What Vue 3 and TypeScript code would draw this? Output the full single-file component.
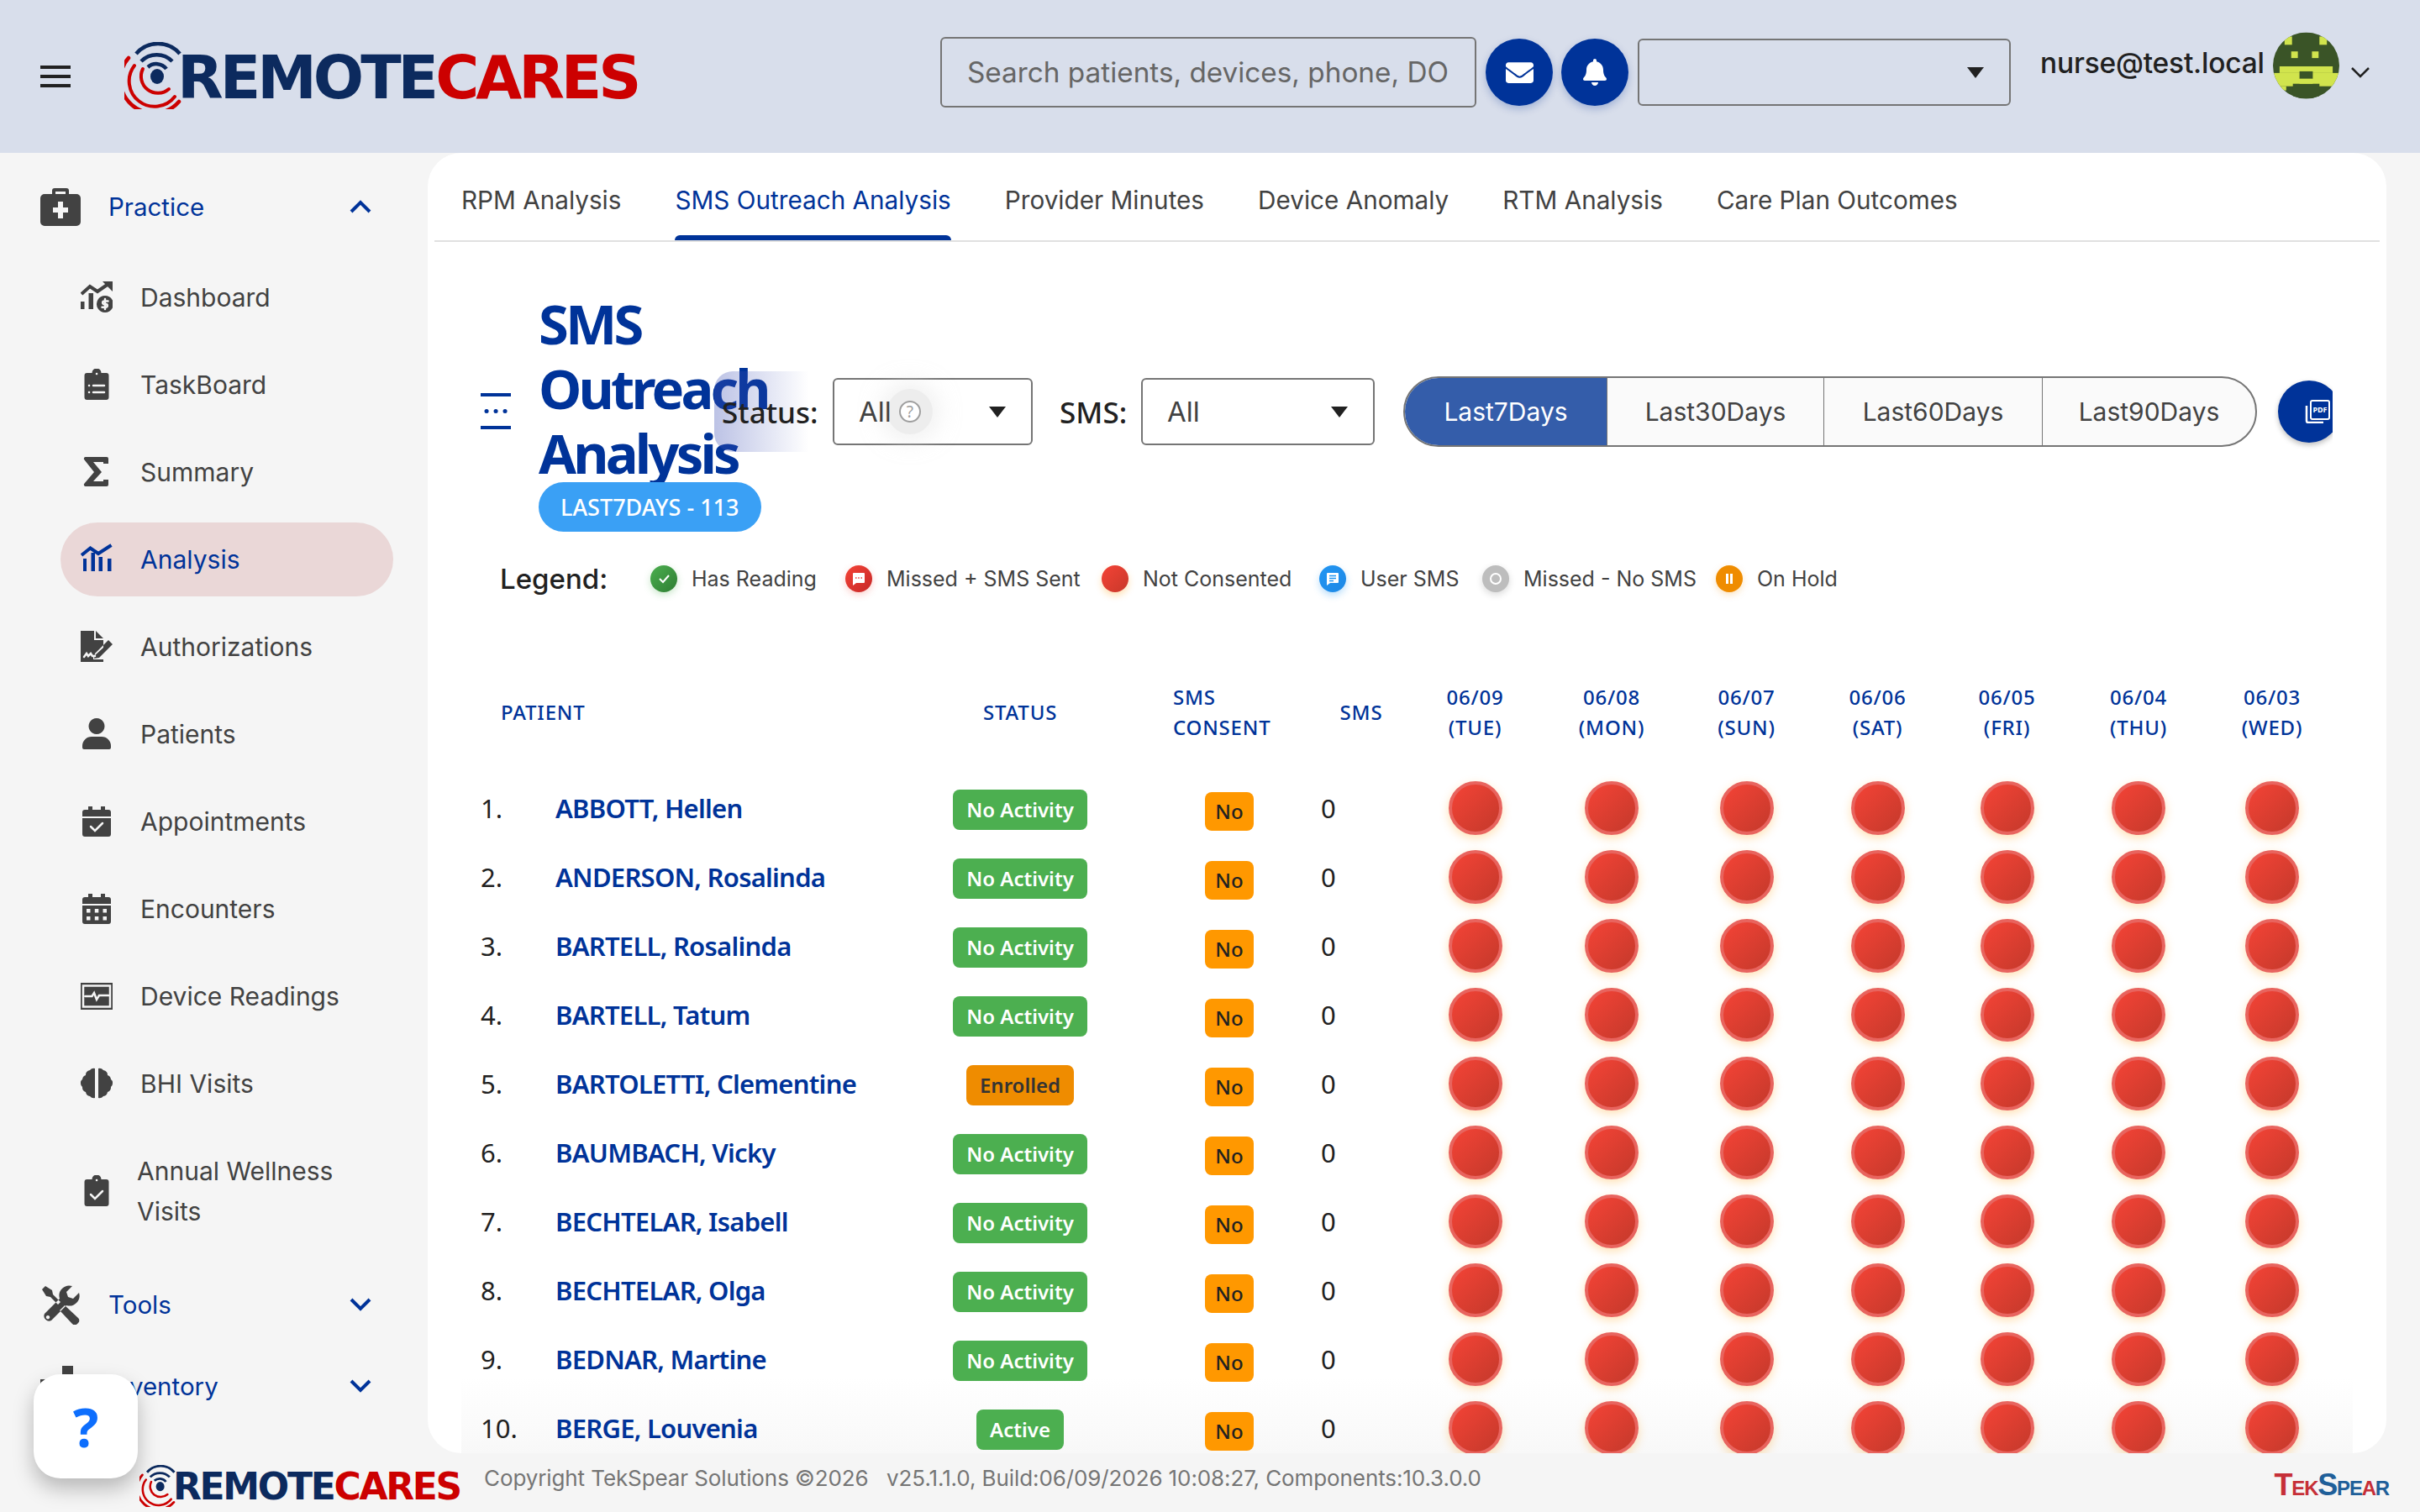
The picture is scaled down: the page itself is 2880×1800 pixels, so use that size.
<script setup lang="ts">
interface NavIcon {
  d?: string;
  line?: string;
  cut?: string;
}

interface NavItem {
  label: string;
  icon: NavIcon;
  active?: boolean;
}

const clipTop =
  'M4.5 8a3 3 0 0 1 3-3h6a5.5 5.5 0 0 1 11 0h6a3 3 0 0 1 3 3v26a3 3 0 0 1-3 3h-23a3 3 0 0 1-3-3z';
const calTop = 'M9 1h5v4h10V1h5v4h4a3 3 0 0 1 3 3v5H2V8a3 3 0 0 1 3-3h4z';

const navItems: NavItem[] = [
  {
    label: 'Dashboard',
    icon: {
      d: 'M0 24h4.5v9H0z M9.5 14h5.5v19H9.5z M26 0h12v12z M29 17a10 10 0 1 1-.01 0z',
      line: 'M1 15L11 6l9 6 13-9',
      cut: 'M29 21v12 M32.5 23.5h-4.5a1.8 1.8 0 0 0 0 3.6h2a1.8 1.8 0 0 1 0 3.6h-4.5'
    }
  },
  {
    label: 'TaskBoard',
    icon: { d: clipTop, cut: 'M15 20h13 M15 28h13 M10 20h.1 M10 28h.1 M19 6h.1' }
  },
  {
    label: 'Summary',
    icon: { d: 'M6 1h25a2 2 0 0 1 2 2v6h-6V7H15l10 12-10 11h12v-2h6v6a2 2 0 0 1-2 2H6a2 2 0 0 1-1.500-3.500L16 19 4.500 4.500A2 2 0 0 1 6 1z' }
  },
  {
    label: 'Analysis',
    active: true,
    icon: {
      d: 'M3 18h4v15H3z M12.500 11h4.500v22h-4.500z M21.500 16h4.500v17h-4.500z M32 18h4.500v15H32z',
      line: 'M1 14L11.500 5.500 21 12 36.500 2'
    }
  },
  {
    label: 'Authorizations',
    icon: {
      d: 'M0 0h16v11h11v9L15 31v3h12v3H0z M18 0l9 9h-9z M33 11l5 5-16 16-6 1 1-6z',
      cut: 'M4 31l3-4 2 3 3-3 2 3h3'
    }
  },
  {
    label: 'Patients',
    icon: { d: 'M19 0a9.500 9.500 0 1 1-.01 0z M13 22h12a11 11 0 0 1 11 11v2a2 2 0 0 1-2 2H4a2 2 0 0 1-2-2v-2a11 11 0 0 1 11-11z' }
  },
  {
    label: 'Appointments',
    icon: {
      d: calTop + ' M2 15h34v19a3 3 0 0 1-3 3H5a3 3 0 0 1-3-3z',
      cut: 'M12 25l5 5 9-9'
    }
  },
  {
    label: 'Encounters',
    icon: {
      d: calTop + ' M2 15h34v19a3 3 0 0 1-3 3H5a3 3 0 0 1-3-3z M7 19h4.500v4.500H7z M16.800 19h4.500v4.500h-4.500z M26.500 19h4.500v4.500h-4.500z M7 28h4.500v4.500H7z M16.800 28h4.500v4.500h-4.500z M26.500 28h4.500v4.500h-4.500z'
    }
  },
  {
    label: 'Device Readings',
    icon: { d: 'M0 3h38v32H0z', cut: 'M3 6.500h32v25H3z M5.500 19h8l2.500-4 3 8 3-5h11' }
  },
  {
    label: 'BHI Visits',
    icon: {
      d: 'M17 1a6 6 0 0 0-6 2 6 6 0 0 0-5 6 6 6 0 0 0-4 5 5 5 0 0 0-2 5 5 5 0 0 0 2 4 6 6 0 0 0 4 6 6 6 0 0 0 5 5 6 6 0 0 0 6 2z M21 1a6 6 0 0 1 6 2 6 6 0 0 1 5 6 6 6 0 0 1 4 5 5 5 0 0 1 2 5 5 5 0 0 1-2 4 6 6 0 0 1-4 6 6 6 0 0 1-5 5 6 6 0 0 1-6 2z'
    }
  }
];

const annualIcon: NavIcon = { d: clipTop, cut: 'M12 23l5 5 9-9 M19 6h.1' };

const tabs: string[] = [
  'RPM Analysis',
  'SMS Outreach Analysis',
  'Provider Minutes',
  'Device Anomaly',
  'RTM Analysis',
  'Care Plan Outcomes'
];

const ranges: string[] = ['Last7Days', 'Last30Days', 'Last60Days', 'Last90Days'];

const legend = [
  { label: 'Has Reading', kind: 'reading' },
  { label: 'Missed + SMS Sent', kind: 'missed' },
  { label: 'Not Consented', kind: 'none' },
  { label: 'User SMS', kind: 'user' },
  { label: 'Missed - No SMS', kind: 'nosms' },
  { label: 'On Hold', kind: 'hold' }
];

const dates = [
  { day: '06/09', name: '(TUE)', w: 163 },
  { day: '06/08', name: '(MON)', w: 162 },
  { day: '06/07', name: '(SUN)', w: 159 },
  { day: '06/06', name: '(SAT)', w: 153 },
  { day: '06/05', name: '(FRI)', w: 155 },
  { day: '06/04', name: '(THU)', w: 158 },
  { day: '06/03', name: '(WED)', w: 160 }
];

const patients = [
  { name: 'ABBOTT, Hellen', status: 'No Activity' },
  { name: 'ANDERSON, Rosalinda', status: 'No Activity' },
  { name: 'BARTELL, Rosalinda', status: 'No Activity' },
  { name: 'BARTELL, Tatum', status: 'No Activity' },
  { name: 'BARTOLETTI, Clementine', status: 'Enrolled' },
  { name: 'BAUMBACH, Vicky', status: 'No Activity' },
  { name: 'BECHTELAR, Isabell', status: 'No Activity' },
  { name: 'BECHTELAR, Olga', status: 'No Activity' },
  { name: 'BEDNAR, Martine', status: 'No Activity' },
  { name: 'BERGE, Louvenia', status: 'Active' }
];

const mailPath =
  'M502.3 190.8c3.9-3.1 9.7-.2 9.7 4.7V400c0 26.500-21.500 48-48 48H48c-26.500 0-48-21.500-48-48V195.600c0-5 5.700-7.800 9.700-4.700 22.400 17.400 52.100 39.500 154.100 113.600 21.100 15.400 56.700 47.800 92.200 47.600 35.700.3 72-32.800 92.300-47.600 102-74.100 131.600-96.300 154-113.700zM256 320c23.200.4 56.600-29.200 73.400-41.400 132.700-96.300 142.800-104.700 173.400-128.700 5.800-4.500 9.200-11.500 9.200-18.900v-19c0-26.500-21.500-48-48-48H48C21.500 64 0 85.500 0 112v19c0 7.400 3.400 14.300 9.200 18.900 30.600 23.900 40.700 32.400 173.400 128.700 16.800 12.200 50.200 41.800 73.400 41.400z';
const bellPath =
  'M224 512c35.320 0 63.970-28.650 63.970-64H160.030c0 35.350 28.650 64 63.970 64zm215.390-149.710c-19.320-20.760-55.470-51.990-55.470-154.290 0-77.700-54.480-139.900-127.940-155.160V32c0-17.670-14.320-32-31.980-32s-31.980 14.330-31.980 32v20.840C118.560 68.100 64.080 130.300 64.080 208c0 102.300-36.150 133.530-55.470 154.290-6 6.450-8.660 14.160-8.610 21.710.11 16.400 12.980 32 32.100 32h383.800c19.120 0 32-15.600 32.100-32 .05-7.550-2.610-15.270-8.610-21.710z';
</script>

<template>
  <div class="page">
    <header class="topbar">
      <div class="burger"><span></span><span></span><span></span></div>
      <div class="logo">
        <svg class="logo-mark" viewBox="0 0 68 80" fill="none">
          <g stroke="#cc0000" stroke-linecap="round">
            <path d="M5 19A39 39 0 0 0 65 71" stroke-width="4.500" />
            <path d="M12 28A30 30 0 0 0 60 65" stroke-width="4" />
            <path d="M22 32A20 20 0 0 0 53 56" stroke-width="4" />
          </g>
          <g stroke="#0c2a5e" stroke-width="4.500">
            <path d="M14 14A34 34 0 0 1 66 14" />
            <path d="M20 23A26 26 0 0 1 57 23" />
            <path d="M28 30A15 15 0 0 1 50 32" />
          </g>
          <ellipse cx="39" cy="41" rx="8" ry="9" fill="#0c2a5e" />
        </svg>
        <span class="logo-text"><b>REMOTE</b><i>CARES</i></span>
      </div>
      <input class="search" placeholder="Search patients, devices, phone, DOB" />
      <button class="round-btn">
        <svg width="33" height="33" viewBox="0 0 512 512"><path :d="mailPath" fill="#fff" /></svg>
      </button>
      <button class="round-btn bell">
        <svg width="28" height="32" viewBox="0 0 448 512"><path :d="bellPath" fill="#fff" /></svg>
      </button>
      <div class="org-select"><span class="caret"></span></div>
      <span class="email">nurse@test.local</span>
      <svg class="avatar" viewBox="0 0 80 80">
        <defs>
          <clipPath id="avatarClip"><circle cx="40" cy="40" r="40" /></clipPath>
        </defs>
        <g clip-path="url(#avatarClip)">
          <rect width="80" height="80" fill="#3a5427" />
          <g fill="#d1e44d">
            <rect x="14" y="5" width="9" height="10" />
            <rect x="56" y="5" width="9" height="10" />
            <rect x="22" y="23" width="8" height="8" />
            <rect x="47" y="23" width="8" height="8" />
            <rect x="8" y="41" width="64" height="8" />
            <rect x="0" y="49" width="80" height="16" />
            <rect x="8" y="65" width="8" height="5" />
          </g>
          <rect x="32" y="47" width="16" height="9" fill="#3a5427" />
          <rect x="24" y="62" width="32" height="18" fill="#3a5427" />
          <rect x="32" y="56" width="16" height="6" fill="#d1e44d" />
        </g>
      </svg>
      <svg class="user-chevron" width="24" height="14" viewBox="0 0 24 14" fill="none">
        <path d="M2 2l10 10L22 2" stroke="#212121" stroke-width="2.500" />
      </svg>
    </header>

    <div class="body">
      <aside class="sidebar">
        <div class="group-row">
          <svg class="group-icon" width="48" height="48" viewBox="0 0 48 48">
            <path
              fill="#424242"
              fill-rule="evenodd"
              d="M14 9V5a3 3 0 0 1 3-3h14a3 3 0 0 1 3 3v4h9a5 5 0 0 1 5 5v28a5 5 0 0 1-5 5H5a5 5 0 0 1-5-5V14a5 5 0 0 1 5-5z M18 6v3h12V6z M21 18v7h-6v6h6v7h6v-7h6v-6h-6v-7z"
            />
          </svg>
          <span class="group-label">Practice</span>
          <svg class="chevron" width="26" height="16" viewBox="0 0 26 16" fill="none">
            <path d="M2 14L13 3l11 11" stroke="#003399" stroke-width="4" />
          </svg>
        </div>

        <ul class="nav">
          <li v-for="item in navItems" :key="item.label" class="nav-item" :class="{ active: item.active }">
            <svg class="nav-icon" viewBox="0 0 38 38">
              <path v-if="item.icon.d" :d="item.icon.d" fill-rule="evenodd" class="ic-fill" />
              <path v-if="item.icon.line" :d="item.icon.line" class="ic-line" />
              <path v-if="item.icon.cut" :d="item.icon.cut" class="ic-cut" />
            </svg>
            <span>{{ item.label }}</span>
          </li>
          <li class="nav-item annual">
            <svg class="nav-icon" viewBox="0 0 38 38">
              <path :d="annualIcon.d" class="ic-fill" />
              <path :d="annualIcon.cut" class="ic-cut" />
            </svg>
            <span>Annual Wellness Visits</span>
          </li>
        </ul>

        <div class="group-row tools">
          <svg class="group-icon" width="48" height="48" viewBox="0 0 48 48">
            <path
              fill="#424242"
              fill-rule="evenodd"
              d="M2 6l4-4 8 5 1 5 9 9-3 3-9-9-5-1z M29 25l16 15a4 4 0 0 1 0 6l-1 1a4 4 0 0 1-6 0L23 31z M46 10l-7 7-6-2-2-6 7-7a12 12 0 0 0-15 15L5 35a6 6 0 0 0 8 8l18-18a12 12 0 0 0 15-15z M9 37a2.200 2.200 0 1 1-.01 0z"
            />
          </svg>
          <span class="group-label">Tools</span>
          <svg class="chevron" width="26" height="16" viewBox="0 0 26 16" fill="none">
            <path d="M2 2l11 11L24 2" stroke="#003399" stroke-width="4" />
          </svg>
        </div>
        <div class="group-row inventory">
          <svg class="group-icon" width="48" height="48" viewBox="0 0 48 48">
            <path fill="#424242" d="M26 0h13v14H26z M0 16h48v30H0z" />
          </svg>
          <span class="group-label">Inventory</span>
          <svg class="chevron" width="26" height="16" viewBox="0 0 26 16" fill="none">
            <path d="M2 2l11 11L24 2" stroke="#003399" stroke-width="4" />
          </svg>
        </div>
      </aside>

      <main class="card">
        <nav class="tabs">
          <a v-for="(tab, i) in tabs" :key="tab" class="tab" :class="{ on: i === 1 }">{{ tab }}</a>
        </nav>

        <section class="content">
          <div class="toolbar">
            <svg class="list-icon" width="36" height="44" viewBox="0 0 36 44">
              <path d="M0 2h36M0 41h36" stroke="#003399" stroke-width="4" />
              <path d="M7 21.500h.1M18 21.500h.1M29 21.500h.1" stroke="#003399" stroke-width="5" stroke-linecap="round" />
            </svg>
            <div class="title-col">
              <h1>SMS Outreach Analysis</h1>
              <span class="count">LAST7DAYS - 113</span>
            </div>
            <div class="filter status">
              <label>Status:</label>
            </div>
            <div class="select first">
              <span class="val">All</span>
              <span class="help-dot">?</span>
              <span class="caret"></span>
            </div>
            <label class="sms-label">SMS:</label>
            <div class="select second">
              <span class="val">All</span>
              <span class="caret"></span>
            </div>
            <div class="segment">
              <span v-for="(r, i) in ranges" :key="r" class="seg" :class="{ on: i === 0 }">{{ r }}</span>
            </div>
            <button class="pdf-btn">
              <svg width="30" height="28" viewBox="0 0 30 28">
                <path d="M2 7v18a2 2 0 0 0 2 2h18" fill="none" stroke="#fff" stroke-width="2.500" />
                <rect x="7" y="1" width="22" height="22" rx="2" fill="#003399" stroke="#fff" stroke-width="2" />
                <text x="18" y="15" text-anchor="middle" class="pdf-text">PDF</text>
              </svg>
            </button>
          </div>

          <div class="legend">
            <span class="legend-title">Legend:</span>
            <span v-for="l in legend" :key="l.kind" class="legend-item">
              <span class="mark" :class="l.kind">
                <svg v-if="l.kind === 'reading'" width="20" height="20" viewBox="0 0 20 20" fill="none">
                  <path d="M5 10l4 4 7-8" stroke="#fff" stroke-width="2" />
                </svg>
                <svg v-else-if="l.kind === 'missed'" width="20" height="20" viewBox="0 0 20 20">
                  <path d="M3 4a1 1 0 0 1 1-1h12a1 1 0 0 1 1 1v10a1 1 0 0 1-1 1H7l-4 3z" fill="#fff" />
                  <path d="M6 9h1.500M9.200 9h1.500M12.500 9H14" stroke="#e53935" stroke-width="1.500" />
                </svg>
                <svg v-else-if="l.kind === 'user'" width="20" height="20" viewBox="0 0 20 20">
                  <path d="M3 4a1 1 0 0 1 1-1h12a1 1 0 0 1 1 1v10a1 1 0 0 1-1 1H7l-4 3z" fill="#fff" />
                  <path d="M6 6.500h8M6 9.500h8M6 12.500h5" stroke="#2196f3" stroke-width="1.500" />
                </svg>
                <svg v-else-if="l.kind === 'nosms'" width="20" height="20" viewBox="0 0 20 20" fill="none">
                  <circle cx="10" cy="10" r="6" stroke="#fff" stroke-width="2" />
                </svg>
                <svg v-else-if="l.kind === 'hold'" width="20" height="20" viewBox="0 0 20 20">
                  <path d="M6 4h3v12H6z M11 4h3v12h-3z" fill="#fff" />
                </svg>
              </span>
              {{ l.label }}
            </span>
          </div>

          <table class="grid">
            <colgroup>
              <col class="c-num" />
              <col class="c-name" />
              <col class="c-status" />
              <col class="c-consent" />
              <col class="c-sms" />
              <col v-for="d in dates" :key="d.day" :style="{ width: d.w + 'px' }" />
            </colgroup>
            <thead>
              <tr>
                <th colspan="2" class="th-patient">PATIENT</th>
                <th>STATUS</th>
                <th class="th-consent">SMS<br />CONSENT</th>
                <th>SMS</th>
                <th v-for="d in dates" :key="d.day">{{ d.day }}<br />{{ d.name }}</th>
              </tr>
            </thead>
            <tbody>
              <tr v-for="(p, i) in patients" :key="p.name">
                <td class="num">{{ i + 1 }}.</td>
                <td class="name">{{ p.name }}</td>
                <td class="center">
                  <span class="pill" :class="p.status === 'Enrolled' ? 'orange' : 'green'">{{ p.status }}</span>
                </td>
                <td class="consent"><span class="no">No</span></td>
                <td class="zero">0</td>
                <td v-for="d in dates" :key="d.day" class="center"><span class="dot"></span></td>
              </tr>
            </tbody>
          </table>
        </section>
      </main>
    </div>

    <footer class="footer">
      <div class="logo small">
        <svg class="logo-mark" viewBox="0 0 68 80" fill="none">
          <g stroke="#cc0000" stroke-linecap="round">
            <path d="M5 19A39 39 0 0 0 65 71" stroke-width="4.500" />
            <path d="M12 28A30 30 0 0 0 60 65" stroke-width="4" />
            <path d="M22 32A20 20 0 0 0 53 56" stroke-width="4" />
          </g>
          <g stroke="#0c2a5e" stroke-width="4.500">
            <path d="M14 14A34 34 0 0 1 66 14" />
            <path d="M20 23A26 26 0 0 1 57 23" />
            <path d="M28 30A15 15 0 0 1 50 32" />
          </g>
          <ellipse cx="39" cy="41" rx="8" ry="9" fill="#0c2a5e" />
        </svg>
        <span class="logo-text"><b>REMOTE</b><i>CARES</i></span>
      </div>
      <span class="copy">Copyright TekSpear Solutions ©2026 &nbsp;&nbsp;v25.1.1.0, Build:06/09/2026 10:08:27, Components:10.3.0.0</span>
      <span class="tek"><b class="big red">T</b><b class="red">EK</b><b class="big blue">S</b><b class="blue">PE</b><b class="red">A</b><b class="blue">R</b></span>
    </footer>

    <button class="help">?</button>
  </div>
</template>

<style scoped>
.page {
  position: relative;
  width: 2880px;
  height: 1800px;
  overflow: hidden;
  display: flex;
  flex-direction: column;
  background: #f5f5f5;
  font-family: Inter, 'Noto Sans', sans-serif;
  color: #424242;
}

.topbar {
  flex: 0 0 182px;
  display: flex;
  align-items: center;
  padding-bottom: 10px;
  box-sizing: border-box;
  background: #d8deeb;
}

.burger {
  margin: 10px 0 0 48px;
  width: 36px;
  display: flex;
  flex-direction: column;
  gap: 7px;
}

.burger span {
  height: 4px;
  background: #212121;
}

.logo {
  display: flex;
  align-items: center;
  width: 610px;
  margin: 8px 0 0 64px;
}

.logo-mark {
  flex: none;
  width: 68px;
  height: 80px;
}

.logo-text {
  margin-left: -5px;
  position: relative;
  top: 3px;
  font-family: 'DejaVu Sans', sans-serif;
  font-size: 71px;
  line-height: 80px;
  letter-spacing: -4px;
  white-space: nowrap;
}

.logo-text b {
  color: #0c2a5e;
  font-weight: 700;
}

.logo-text i {
  color: #cc0000;
  font-style: normal;
  font-weight: 700;
}

.search {
  width: 638px;
  height: 84px;
  margin-left: 361px;
  padding: 0 30px;
  box-sizing: border-box;
  border: 2px solid #757575;
  border-radius: 6px;
  background: transparent;
  font: 400 33.300px Inter, sans-serif;
  outline: none;
}

.search::placeholder {
  color: #666;
  opacity: 1;
}

.round-btn {
  width: 80px;
  height: 80px;
  margin-left: 11px;
  border: 0;
  border-radius: 50%;
  display: flex;
  align-items: center;
  justify-content: center;
  background: #003399;
  box-shadow: 0 4px 10px rgba(0, 51, 153, 0.25);
}

.round-btn.bell {
  margin-left: 10px;
}

.org-select {
  position: relative;
  width: 444px;
  height: 80px;
  margin-left: 11px;
  box-sizing: border-box;
  border: 2px solid #757575;
  border-radius: 6px;
}

.caret {
  position: absolute;
  top: 50%;
  right: 30px;
  margin-top: -6px;
  border-style: solid;
  border-width: 13px 10px 0;
  border-color: #212121 transparent transparent;
}

.email {
  margin: 0 0 22px 35px;
  width: 266px;
  font-size: 33.500px;
  font-weight: 500;
  letter-spacing: -0.2px;
  color: #212121;
  white-space: nowrap;
}

.avatar {
  width: 79px;
  height: 80px;
  margin: 0 0 16px 11px;
}

.user-chevron {
  margin-left: 13px;
}

.body {
  flex: 1;
  min-height: 0;
  display: flex;
}

.sidebar {
  flex: 0 0 509px;
  box-sizing: border-box;
  overflow: hidden;
  padding-top: 40px;
}

.group-row {
  display: flex;
  align-items: center;
  height: 48px;
  padding-left: 48px;
}

.group-label {
  margin-left: 33px;
  width: 287px;
  font-size: 29.500px;
  color: #003399;
}

.nav {
  list-style: none;
  margin: 40px 0 0;
  padding: 0;
}

.nav-item {
  display: flex;
  align-items: center;
  width: 396px;
  height: 88px;
  margin: 0 0 16px 72px;
  box-sizing: border-box;
  padding-left: 24px;
  border-radius: 44px;
  font-size: 30px;
  color: #424242;
  fill: #424242;
  stroke: #424242;
}

.nav-item.active {
  background: #ead7d7;
  color: #003399;
  fill: #003399;
  stroke: #003399;
}

.nav-icon {
  flex: none;
  width: 38px;
  height: 38px;
  margin-right: 33px;
}

.ic-fill {
  stroke: none;
}

.ic-line {
  fill: none;
  stroke-width: 4;
}

.ic-cut {
  fill: none;
  stroke: #f5f5f5;
  stroke-width: 2.500;
  stroke-linecap: round;
}

.nav-item.annual {
  height: 104px;
  line-height: 48px;
  margin-top: 32px;
}

.nav-item.annual .nav-icon {
  margin-right: 29px;
}

.group-row.tools {
  margin-top: 59px;
}

.group-row.inventory {
  margin-top: 49px;
}

.card {
  flex: none;
  width: 2331px;
  height: 1548px;
  display: flex;
  flex-direction: column;
  overflow: hidden;
  border-radius: 40px;
  background: #fff;
}

.tabs {
  flex: 0 0 106px;
  box-sizing: border-box;
  margin: 0 8px;
  display: flex;
  border-bottom: 2px solid #e0e0e0;
}

.tab {
  position: relative;
  box-sizing: border-box;
  height: 104px;
  padding: 38px 32px 0;
  line-height: 36px;
  font-size: 29.700px;
  color: #424242;
  white-space: nowrap;
}

.tab.on {
  color: #003399;
}

.tab.on::after {
  content: '';
  position: absolute;
  left: 32px;
  right: 32px;
  bottom: 0;
  height: 6px;
  border-radius: 6px 6px 0 0;
  background: #003399;
}

.content {
  flex: 1;
  min-height: 0;
  margin: 0 40px;
  padding-top: 59px;
  overflow: hidden;
  background: linear-gradient(to bottom, #fff calc(100% - 90px), #f8f8f8 100%);
}

.toolbar {
  width: 2227px;
  height: 286px;
  box-sizing: border-box;
  padding-left: 23px;
  display: flex;
  align-items: center;
  overflow: hidden;
}

.toolbar > * {
  flex-shrink: 0;
}

.list-icon {
  margin-right: 33px;
}

.title-col {
  width: 218px;
}

h1 {
  margin: 0 0 -4px;
  font: 700 65px/77px 'Noto Sans', sans-serif;
  letter-spacing: -3.800px;
  color: #003399;
}

.count {
  display: inline-block;
  position: relative;
  padding: 0 26px;
  height: 59px;
  line-height: 57px;
  border-radius: 30px;
  background: #3aa0f5;
  color: #fff;
  font: 500 27px/59px 'Noto Sans', sans-serif;
  white-space: nowrap;
}

.filter.status {
  position: relative;
  width: 132px;
  height: 96px;
  margin-left: -9px;
  padding-left: 9px;
  box-sizing: border-box;
  display: flex;
  align-items: center;
  border-radius: 22px 0 0 22px;
  background: linear-gradient(90deg, rgba(63, 81, 181, 0.35), rgba(63, 81, 181, 0) 85%);
}

.filter.status label,
.sms-label {
  font: 500 35px 'Noto Sans', sans-serif;
  color: #212121;
}

.select {
  position: relative;
  height: 80px;
  box-sizing: border-box;
  border: 2px solid #757575;
  border-radius: 6px;
  display: flex;
  align-items: center;
  padding-left: 29px;
  background: #fff;
}

.select .val {
  position: relative;
  z-index: 1;
  font-size: 33px;
  color: #424242;
}

.select.first {
  width: 238px;
  margin-left: 9px;
}

.help-dot {
  position: relative;
  width: 26px;
  height: 26px;
  margin-left: 9px;
  box-sizing: border-box;
  border: 2px solid #9e9e9e;
  border-radius: 50%;
  text-align: center;
  font: 400 19px/22px 'Noto Sans', sans-serif;
  color: #9e9e9e;
  box-shadow: 0 0 0 14px #ededed, 0 0 24px 22px rgba(230, 230, 230, 0.5);
}

.sms-label {
  margin-left: 32px;
  width: 80px;
}

.select.second {
  width: 278px;
  margin-left: 17px;
}

.segment {
  width: 1016px;
  height: 84px;
  margin-left: 34px;
  box-sizing: border-box;
  display: grid;
  grid-template-columns: 240px 258px 260px 1fr;
  border: 2px solid #757575;
  border-radius: 42px;
  overflow: hidden;
  background: #fafafa;
}

.seg {
  display: flex;
  align-items: center;
  justify-content: center;
  border-left: 1.500px solid #757575;
  font-size: 30px;
  color: #424242;
}

.seg.on {
  border-left: 0;
  background: #345daa;
  color: #fff;
}

.pdf-btn {
  width: 74px;
  height: 74px;
  margin-left: 25px;
  padding: 0 0 0 32px;
  border: 0;
  border-radius: 50%;
  display: flex;
  align-items: center;
  background: #003399;
  box-shadow: 0 3px 6px rgba(0, 0, 0, 0.25);
}

.pdf-btn svg {
  flex: none;
}

.pdf-text {
  fill: #fff;
  font: 700 9px 'Noto Sans', sans-serif;
}

.legend {
  display: grid;
  grid-template-columns: 179px 232px 305px 259px 194px 278px auto;
  align-items: center;
  height: 40px;
  margin-top: 36px;
  padding-left: 46px;
  font-size: 25px;
  white-space: nowrap;
}

.legend-title {
  font-size: 33px;
  font-weight: 500;
  color: #212121;
}

.legend-item {
  display: flex;
  align-items: center;
  color: #424242;
}

.mark {
  width: 32px;
  height: 32px;
  margin-right: 17px;
  border-radius: 50%;
  display: flex;
  align-items: center;
  justify-content: center;
}

.mark.reading {
  background: linear-gradient(135deg, #4caf50, #2e7d32);
  box-shadow: 0 3px 8px rgba(76, 175, 80, 0.3);
}

.mark.missed {
  background: linear-gradient(135deg, #f44336, #c62828);
  box-shadow: 0 3px 8px rgba(244, 67, 54, 0.25);
}

.mark.none {
  background: linear-gradient(135deg, #f44336, #c8382a);
  box-shadow: 0 4px 8px rgba(255, 152, 0, 0.3);
}

.mark.user {
  background: linear-gradient(135deg, #2196f3, #1e88e5);
  box-shadow: 0 4px 8px rgba(33, 150, 243, 0.3);
}

.mark.nosms {
  background: #bdbdbd;
  box-shadow: 0 3px 8px rgba(0, 0, 0, 0.15);
}

.mark.hold {
  background: #ef8c00;
  box-shadow: 0 3px 8px rgba(239, 140, 0, 0.25);
}

.grid {
  table-layout: fixed;
  width: 2235px;
  margin-top: 66px;
  border-collapse: collapse;
  font-family: 'Noto Sans', sans-serif;
}

.c-num {
  width: 96px;
}

.c-name {
  width: 403px;
}

.c-status {
  width: 332px;
}

.c-consent {
  width: 186px;
}

.c-sms {
  width: 108px;
}

th {
  height: 146px;
  padding: 0;
  font-size: 24px;
  font-weight: 500;
  line-height: 36px;
  letter-spacing: 0.8px;
  color: #003399;
  text-align: center;
}

th.th-patient {
  padding-left: 47px;
  text-align: left;
}

th.th-consent {
  padding-left: 16px;
  text-align: left;
}

td {
  height: 82px;
  padding: 0;
  font-size: 31px;
  color: #212121;
}

td.num {
  padding-left: 23px;
}

td.name {
  padding-left: 16px;
  font-weight: 600;
  letter-spacing: -0.750px;
  color: #003399;
  white-space: nowrap;
}

td.center {
  text-align: center;
}

.pill {
  display: inline-block;
  position: relative;
  top: 2px;
  height: 48px;
  padding: 0 16px;
  border-radius: 8px;
  font-size: 24px;
  font-weight: 600;
  line-height: 48px;
}

.pill.green {
  background: #4caf50;
  color: #fff;
}

.pill.orange {
  background: #ef8c00;
  color: #333;
}

td.consent {
  padding-left: 54px;
}

.no {
  display: inline-block;
  position: relative;
  top: 3px;
  width: 58px;
  height: 46px;
  border-radius: 8px;
  background: #ff9800;
  text-align: center;
  font-size: 24px;
  font-weight: 500;
  line-height: 46px;
}

td.zero {
  padding-left: 6px;
}

.dot {
  display: inline-block;
  width: 64px;
  height: 64px;
  box-sizing: border-box;
  vertical-align: middle;
  border: 4px solid #e8645e;
  border-radius: 50%;
  background: linear-gradient(135deg, #f44336, #c4392b);
  box-shadow: 0 4px 12px rgba(255, 152, 0, 0.3);
}

.footer {
  flex: 0 0 70px;
  display: flex;
  align-items: center;
  padding: 0 37px 0 166px;
  box-sizing: border-box;
  background: #f5f5f5;
}

.logo.small {
  flex: none;
  width: 380px;
  margin: 8px 0 0;
}

.logo.small .logo-mark {
  width: 43px;
  height: 50px;
}

.logo.small .logo-text {
  margin-left: -3px;
  top: 1px;
  font-size: 44px;
  line-height: 50px;
  letter-spacing: -2.300px;
}

.copy {
  margin: 0 0 12px 30px;
  font-size: 26px;
  letter-spacing: -0.100px;
  color: #757575;
  white-space: nowrap;
}

.tek {
  margin: 10px 0 0 auto;
  font-family: 'Liberation Sans', sans-serif;
  font-size: 24px;
  line-height: 36px;
  letter-spacing: -1.200px;
}

.tek .big {
  font-size: 36px;
}

.tek .red {
  color: #c62f37;
}

.tek .blue {
  color: #1f5f99;
}

.help {
  position: absolute;
  left: 40px;
  top: 1636px;
  width: 124px;
  height: 124px;
  border: 0;
  border-radius: 32px;
  background: #fff;
  box-shadow: 0 12px 24px rgba(0, 0, 0, 0.25);
  color: #0d6efd;
  font: 700 64px 'Noto Sans', sans-serif;
}
</style>

<style>
body {
  margin: 0;
  background: #f5f5f5;
}
</style>
